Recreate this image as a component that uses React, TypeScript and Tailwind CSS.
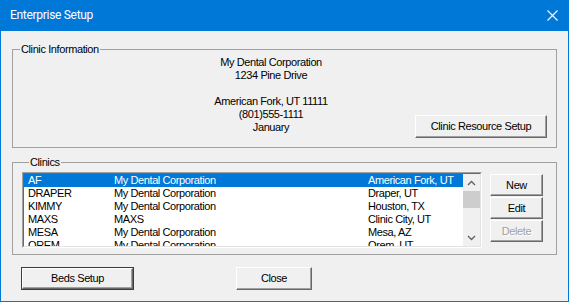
import React from "react";

const clinics = [
  { code: "AF", name: "My Dental Corporation", city: "American Fork, UT" },
  { code: "DRAPER", name: "My Dental Corporation", city: "Draper, UT" },
  { code: "KIMMY", name: "My Dental Corporation", city: "Houston, TX" },
  { code: "MAXS", name: "MAXS", city: "Clinic City, UT" },
  { code: "MESA", name: "My Dental Corporation", city: "Mesa, AZ" },
  { code: "OREM", name: "My Dental Corporation", city: "Orem, UT" },
];

function Btn({
  children,
  className = "",
  disabled = false,
  isDefault = false,
}: {
  children: React.ReactNode;
  className?: string;
  disabled?: boolean;
  isDefault?: boolean;
}) {
  return (
    <div
      className={`${className} ${
        isDefault ? "border border-[#3c3c3c]" : ""
      } flex`}
    >
      <div className="flex-1 flex items-center justify-center bg-[#f0f0f0] border-t border-l border-t-white border-l-white border-b border-r border-b-[#696969] border-r-[#696969] shadow-[inset_-1px_-1px_0_#a0a0a0]">
        <span
          className={
            disabled ? "text-[#a0a0a0] [text-shadow:1px_1px_0_#fff]" : ""
          }
        >
          {children}
        </span>
      </div>
    </div>
  );
}

export default function App() {
  return (
    <div className="w-[569px] h-[302px] bg-[#f0f0f0] border-x border-b border-[#0078d7] flex flex-col text-black text-[11px] leading-[13px] tracking-[-0.4px] font-['Liberation_Sans',Arial,sans-serif]">
      {/* title bar */}
      <div className="h-[31px] shrink-0 bg-[#0078d7] flex items-center justify-between pl-[9px] pr-[10px] text-white">
        <span className="text-[12px] tracking-[-0.3px] font-['Roboto',sans-serif]">
          Enterprise Setup
        </span>
        <svg width="11" height="11" viewBox="0 0 11 11">
          <path d="M0.5 0.5 L10.5 10.5 M10.5 0.5 L0.5 10.5" stroke="#fff" strokeWidth="1.1" />
        </svg>
      </div>

      <div className="px-[11px] flex flex-col">
        {/* Clinic Information */}
        <fieldset className="mt-[12px] border border-[#a0a0a0] pb-[9px]">
          <legend className="ml-[7px] px-[1px]">Clinic Information</legend>
          <div className="grid h-[82px]">
            <div className="[grid-area:1/1] text-center pr-[27px]">
              <div>My Dental Corporation</div>
              <div>1234 Pine Drive</div>
              <div>&nbsp;</div>
              <div>American Fork, UT 11111</div>
              <div>(801)555-1111</div>
              <div>January</div>
            </div>
            <Btn className="[grid-area:1/1] self-end justify-self-end mr-[9px] w-[132px] h-[23px]">
              Clinic Resource Setup
            </Btn>
          </div>
        </fieldset>

        {/* Clinics */}
        <fieldset className="mt-[8px] border border-[#a0a0a0] pt-[3px] pb-[6px] pl-[9px]">
          <legend className="ml-[7px] px-[1px]">Clinics</legend>
          <div className="flex gap-[8px]">
            <div className="w-[460px] h-[76px] border border-t-[#a0a0a0] border-l-[#a0a0a0] border-b-white border-r-white flex">
              <div className="flex-1 flex border border-t-[#696969] border-l-[#696969] border-b-[#e3e3e3] border-r-[#e3e3e3]">
                <div className="flex-1 bg-white overflow-hidden">
                  {clinics.map((c, i) => (
                    <div
                      key={c.code}
                      className={`flex h-[13px] pl-[4px] ${
                        i === 0 ? "bg-[#0078d7] text-white" : ""
                      }`}
                    >
                      <span className="w-[86px] shrink-0">{c.code}</span>
                      <span className="w-[254px] shrink-0">{c.name}</span>
                      <span>{c.city}</span>
                    </div>
                  ))}
                </div>
                <div className="w-[17px] bg-[#f0f0f0] flex flex-col">
                  <div className="h-[17px] flex items-center justify-center">
                    <svg width="9" height="6" viewBox="0 0 9 6">
                      <path d="M1 5 L4.5 1.5 L8 5" fill="none" stroke="#606060" strokeWidth="1.3" />
                    </svg>
                  </div>
                  <div className="h-[17px] bg-[#cdcdcd]" />
                  <div className="flex-1" />
                  <div className="h-[17px] flex items-center justify-center">
                    <svg width="9" height="6" viewBox="0 0 9 6">
                      <path d="M1 1 L4.5 4.5 L8 1" fill="none" stroke="#606060" strokeWidth="1.3" />
                    </svg>
                  </div>
                </div>
              </div>
            </div>
            <div className="w-[53px] mt-[2px] flex flex-col gap-[1px]">
              <Btn className="h-[22px]">New</Btn>
              <Btn className="h-[22px]">Edit</Btn>
              <Btn className="h-[22px]" disabled>
                Delete
              </Btn>
            </div>
          </div>
        </fieldset>

        {/* bottom buttons */}
        <div className="mt-[12px] flex">
          <Btn isDefault className="ml-[9px] w-[113px] h-[23px]">
            Beds Setup
          </Btn>
          <Btn className="ml-[102px] w-[76px] h-[23px]">Close</Btn>
        </div>
      </div>
    </div>
  );
}
